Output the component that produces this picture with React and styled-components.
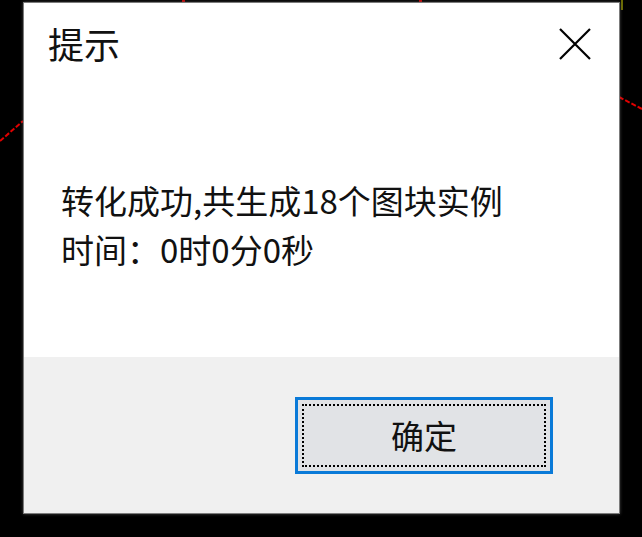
import React from "react";
import styled, { createGlobalStyle } from "styled-components";

const GlobalStyle = createGlobalStyle`
  html, body {
    margin: 0;
    padding: 0;
    background: #000;
  }
  body {
    width: 642px;
    height: 537px;
    overflow: hidden;
    font-family: "Noto Sans CJK SC", "Noto Sans", sans-serif;
  }
`;

const Desktop = styled.div`
  position: relative;
  width: 642px;
  height: 537px;
  background: #000;
  padding: 2px 0 0 23px;
  box-sizing: border-box;
`;

const Canvas = styled.svg`
  position: absolute;
  left: 0;
  top: 0;
`;

const Window = styled.div`
  position: relative;
  width: 597px;
  height: 512px;
  box-sizing: border-box;
  border: 1px solid #7c7c7c;
  box-shadow: 0 0 3px rgba(110, 110, 110, 0.6);
  background: #fff;
  display: flex;
  flex-direction: column;
`;

const Header = styled.div`
  display: flex;
  align-items: flex-start;
  justify-content: space-between;
  padding: 18px 28px 0 24px;
  height: 86px;
  box-sizing: border-box;
`;

const Title = styled.div`
  font-size: 36px;
  line-height: 44px;
  color: #111;
`;

const Close = styled.button`
  border: 0;
  background: transparent;
  padding: 0;
  margin-top: 7px;
  width: 32px;
  height: 32px;
  display: flex;
`;

const Body = styled.div`
  flex: 1;
  padding: 87px 0 0 37px;
  box-sizing: border-box;
`;

const Line = styled.div`
  font-size: 33px;
  line-height: 49px;
  color: #111;
  white-space: nowrap;
`;

const Footer = styled.div`
  height: 156px;
  background: #f0f0f0;
  display: flex;
  justify-content: flex-end;
  align-items: flex-start;
  padding: 40px 66px 0 0;
  box-sizing: border-box;
`;

const Button = styled.button`
  width: 258px;
  height: 77px;
  box-sizing: border-box;
  border: 3px solid #0a7ad8;
  background: #e1e3e6;
  outline: 2px dotted #000;
  outline-offset: -9px;
  font-family: inherit;
  font-size: 33px;
  color: #111;
  padding: 0 0 2px 0;
`;

export default function App() {
  return (
    <>
      <GlobalStyle />
      <Desktop>
        <Canvas width="642" height="537" viewBox="0 0 642 537">
          <g stroke="#e00000" strokeWidth="2" strokeDasharray="5 2" fill="none">
            <line x1="0" y1="141" x2="23" y2="121" />
            <line x1="619" y1="97" x2="642" y2="109" />
          </g>
          <rect x="182" y="0" width="3" height="2" fill="#c00000" />
          <rect x="419" y="0" width="3" height="2" fill="#c00000" />
          <rect x="621" y="0" width="2" height="10" fill="#6a6a00" />
        </Canvas>
        <Window>
          <Header>
            <Title>提示</Title>
            <Close aria-label="关闭">
              <svg width="32" height="32" viewBox="0 0 32 32">
                <path d="M1 1 L31 31 M31 1 L1 31" stroke="#000" strokeWidth="2.2" />
              </svg>
            </Close>
          </Header>
          <Body>
            <Line>转化成功,共生成18个图块实例</Line>
            <Line>时间：0时0分0秒</Line>
          </Body>
          <Footer>
            <Button>确定</Button>
          </Footer>
        </Window>
      </Desktop>
    </>
  );
}
